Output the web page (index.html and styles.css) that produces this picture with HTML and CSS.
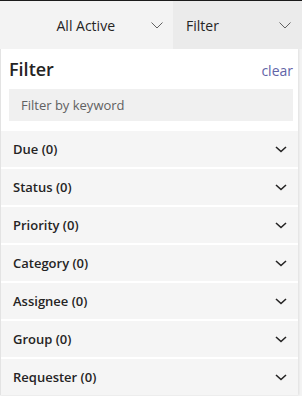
FILE: index.html
```html
<!DOCTYPE html>
<html>
<head>
<meta charset="utf-8">
<link rel="stylesheet" href="styles.css">
</head>
<body>
<div class="topline"></div>
<div class="toolbar">
  <div class="seg seg-view">
    <span class="seg-label">All Active</span>
    <svg class="seg-chev" width="12" height="7" viewBox="0 0 12 7"><path d="M0.5 0.5 L6 6 L11.5 0.5" fill="none" stroke="#616161" stroke-width="1"/></svg>
  </div>
  <div class="seg seg-filter">
    <span class="seg-label">Filter</span>
    <svg class="seg-chev" width="12" height="7" viewBox="0 0 12 7"><path d="M0.5 0.5 L6 6 L11.5 0.5" fill="none" stroke="#616161" stroke-width="1"/></svg>
  </div>
</div>
<div class="panel">
  <div class="panel-head">
    <h2 class="panel-title">Filter</h2>
    <a class="clear">clear</a>
  </div>
  <div class="search"><input class="search-input" type="text" placeholder="Filter by keyword"></div>
  <div class="sections">
    <div class="row"><span class="row-label">Due (0)</span><svg class="row-chev" width="12" height="7" viewBox="0 0 12 7"><path d="M1 1 L6 5.5 L11 1" fill="none" stroke="#252424" stroke-width="1.6"/></svg></div>
    <div class="row"><span class="row-label">Status (0)</span><svg class="row-chev" width="12" height="7" viewBox="0 0 12 7"><path d="M1 1 L6 5.5 L11 1" fill="none" stroke="#252424" stroke-width="1.6"/></svg></div>
    <div class="row"><span class="row-label">Priority (0)</span><svg class="row-chev" width="12" height="7" viewBox="0 0 12 7"><path d="M1 1 L6 5.5 L11 1" fill="none" stroke="#252424" stroke-width="1.6"/></svg></div>
    <div class="row"><span class="row-label">Category (0)</span><svg class="row-chev" width="12" height="7" viewBox="0 0 12 7"><path d="M1 1 L6 5.5 L11 1" fill="none" stroke="#252424" stroke-width="1.6"/></svg></div>
    <div class="row"><span class="row-label">Assignee (0)</span><svg class="row-chev" width="12" height="7" viewBox="0 0 12 7"><path d="M1 1 L6 5.5 L11 1" fill="none" stroke="#252424" stroke-width="1.6"/></svg></div>
    <div class="row"><span class="row-label">Group (0)</span><svg class="row-chev" width="12" height="7" viewBox="0 0 12 7"><path d="M1 1 L6 5.5 L11 1" fill="none" stroke="#252424" stroke-width="1.6"/></svg></div>
    <div class="row"><span class="row-label">Requester (0)</span><svg class="row-chev" width="12" height="7" viewBox="0 0 12 7"><path d="M1 1 L6 5.5 L11 1" fill="none" stroke="#252424" stroke-width="1.6"/></svg></div>
  </div>
</div>
</body>
</html>
```

FILE: styles.css
```css
* { box-sizing: border-box; }
html, body { margin: 0; padding: 0; }
body {
  background: #f3f3f3;
  font-family: "Open Sans", "Noto Sans", sans-serif;
  color: #252424;
  width: 302px;
  height: 396px;
  overflow: hidden;
}
.topline { height: 1px; background: #1b1b1b; }
.toolbar {
  display: flex;
  height: 48px;
}
.seg {
  display: flex;
  align-items: center;
  font-size: 14px;
  color: #252424;
}
.seg-view {
  width: 173px;
  background: #f3f3f3;
  justify-content: flex-end;
  padding-right: 10px;
  gap: 36px;
}
.seg-filter {
  flex: 1;
  background: #ebebeb;
  justify-content: space-between;
  padding: 0 11px 0 13px;
}
.seg-chev { display: block; }
.panel {
  width: 298px;
  background: #ffffff;
  border-left: 1px solid #e3e3e3;
  box-shadow: 1px 0 2px rgba(0,0,0,0.08);
  padding-top: 6px;
}
.panel-head {
  display: flex;
  align-items: baseline;
  justify-content: space-between;
  padding: 0 5px 0 8px;
  height: 34px;
}
.panel-title {
  margin: 0;
  font-size: 18px;
  font-weight: 600;
  line-height: 28px;
}
.clear {
  font-size: 14px;
  color: #6264a7;
  cursor: pointer;
}
.search { padding: 0 5px 0 8px; }
.search-input {
  display: block;
  width: 100%;
  height: 32px;
  border: none;
  background: #f0f0f0;
  padding: 0 12px;
  font-family: inherit;
  font-size: 13px;
  color: #252424;
  outline: none;
}
.search-input::placeholder { color: #616161; }
.sections {
  margin-top: 10px;
  display: flex;
  flex-direction: column;
  gap: 2px;
}
.row {
  height: 36px;
  background: #f5f5f5;
  display: flex;
  align-items: center;
  justify-content: space-between;
  padding: 0 11px 0 12px;
}
.row-label {
  font-size: 13px;
  font-weight: 600;
}
.row-chev { display: block; }
```
